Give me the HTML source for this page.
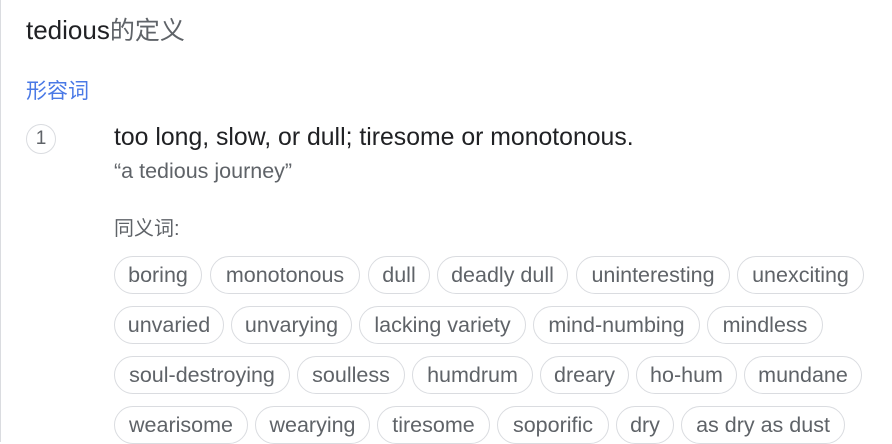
<!DOCTYPE html>
<html><head><meta charset="utf-8"><style>
body{margin:0;width:892px;height:442px;background:#fff;position:relative;overflow:hidden;font-family:"Liberation Sans","Noto Sans CJK SC",sans-serif;}
.bl{position:absolute;left:0;top:0;width:1px;height:442px;background:#dadce0;}
.t{position:absolute;white-space:nowrap;}
.c{position:absolute;height:36px;border:1px solid #dadce0;border-radius:19px;box-sizing:content-box;color:#5f6368;font-size:21.5px;line-height:36px;text-align:center;white-space:nowrap;}
.n{position:absolute;left:26px;top:124px;width:28px;height:28px;border:1px solid #dadce0;border-radius:50%;text-align:center;line-height:28px;font-size:19px;color:#5f6368}
</style></head><body>
<div class="bl"></div>
<div class="t" style="left:26px;top:11px;font-size:26px;color:#202124">tedious<span style="color:#5f6368;font-size:25px">的定义</span></div>
<div class="t" style="left:26px;top:75px;font-size:21px;color:#4a79e6">形容词</div>
<div class="n">1</div>
<div class="t" style="left:114px;top:124px;font-size:24.8px;color:#202124">too long, slow, or dull; tiresome or monotonous.</div>
<div class="t" style="left:114px;top:159px;font-size:21.5px;color:#5f6368">“a tedious journey”</div>
<div class="t" style="left:114px;top:212px;font-size:20px;color:#5f6368">同义词:</div>

<div class="c" style="left:114px;top:256px;width:86px">boring</div>
<div class="c" style="left:210px;top:256px;width:148px">monotonous</div>
<div class="c" style="left:368px;top:256px;width:60px">dull</div>
<div class="c" style="left:437px;top:256px;width:129px">deadly dull</div>
<div class="c" style="left:576px;top:256px;width:152px">uninteresting</div>
<div class="c" style="left:737px;top:256px;width:125px">unexciting</div>

<div class="c" style="left:114px;top:306px;width:108px">unvaried</div>
<div class="c" style="left:231px;top:306px;width:119px">unvarying</div>
<div class="c" style="left:359px;top:306px;width:165px">lacking variety</div>
<div class="c" style="left:533px;top:306px;width:165px">mind-numbing</div>
<div class="c" style="left:707px;top:306px;width:114px">mindless</div>

<div class="c" style="left:114px;top:356px;width:174px">soul-destroying</div>
<div class="c" style="left:297px;top:356px;width:106px">soulless</div>
<div class="c" style="left:412px;top:356px;width:119px">humdrum</div>
<div class="c" style="left:540px;top:356px;width:87px">dreary</div>
<div class="c" style="left:636px;top:356px;width:99px">ho-hum</div>
<div class="c" style="left:744px;top:356px;width:116px">mundane</div>

<div class="c" style="left:114px;top:406px;width:132px">wearisome</div>
<div class="c" style="left:255px;top:406px;width:113px">wearying</div>
<div class="c" style="left:377px;top:406px;width:111px">tiresome</div>
<div class="c" style="left:497px;top:406px;width:110px">soporific</div>
<div class="c" style="left:616px;top:406px;width:56px">dry</div>
<div class="c" style="left:681px;top:406px;width:162px">as dry as dust</div>
</body></html>
